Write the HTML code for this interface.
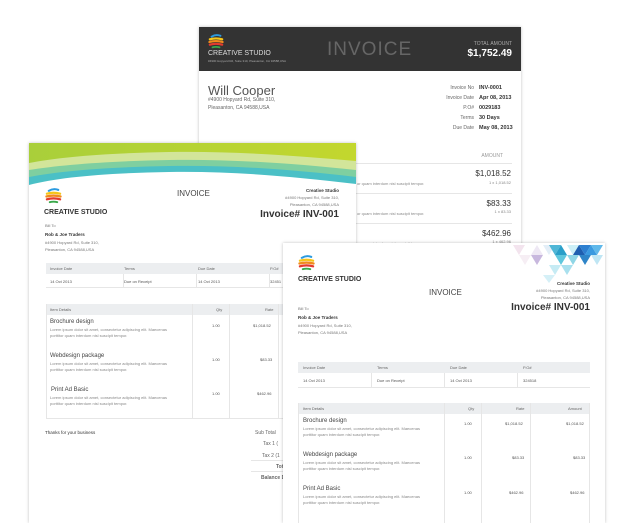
<!DOCTYPE html>
<html><head><meta charset="utf-8"><style>
*{margin:0;padding:0;box-sizing:border-box}
body{width:629px;height:510px;background:#fff;position:relative;overflow:hidden;font-family:"Liberation Sans",sans-serif;color:#444}
.card{position:absolute;background:#fff;box-shadow:0 0 3px rgba(0,0,0,.25);overflow:hidden}
.a{position:absolute;white-space:nowrap}
.t{font-size:5px;color:#666}
.s{font-size:4px;color:#888}
.g{position:absolute;background:#eceef0}
.l{position:absolute;background:#e6e6e6}
</style></head><body>
<svg width="0" height="0" style="position:absolute"><defs>
<g id="logo">
<path d="M4 3 Q9 0 14 2" stroke="#2b9be0" stroke-width="2.2" fill="none" stroke-linecap="round"/>
<path d="M2 6 Q9 4 16 6" stroke="#f5c518" stroke-width="2.4" fill="none" stroke-linecap="round"/>
<path d="M1.5 9 Q9 7 16.5 9" stroke="#f08a1c" stroke-width="2.4" fill="none" stroke-linecap="round"/>
<path d="M2 12 Q9 10 16 12" stroke="#e33b2e" stroke-width="2.4" fill="none" stroke-linecap="round"/>
<path d="M5 15 Q9 14 13 15" stroke="#3aa84a" stroke-width="2" fill="none" stroke-linecap="round"/>
</g></defs></svg>

<!-- back invoice -->
<div class="card" style="left:199px;top:27px;width:322px;height:300px">
  <div style="position:absolute;left:0;top:0;width:322px;height:44px;background:#333"></div>
  <svg class="a" style="left:9px;top:7px" width="16" height="16" viewBox="0 0 18 18"><use href="#logo"/></svg>
  <div class="a" style="left:9px;top:23px;font-size:7px;color:#ddd">CREATIVE STUDIO</div>
  <div class="a" style="left:9px;top:32px;font-size:3px;color:#aaa">#4900 Hopyard Rd, Suite 310, Pleasanton, CA 94588,USA</div>
  <div class="a" style="left:128px;top:12px;font-size:19px;color:#666;letter-spacing:1px">INVOICE</div>
  <div class="a" style="right:9px;top:14px;font-size:5px;color:#aaa">TOTAL AMOUNT</div>
  <div class="a" style="right:9px;top:21px;font-size:10px;color:#fff;font-weight:bold">$1,752.49</div>
  <div class="a" style="left:9px;top:56px;font-size:13px;color:#555">Will Cooper</div>
  <div class="a t" style="left:9px;top:70px">#4900 Hopyard Rd, Suite 310,</div>
  <div class="a t" style="left:9px;top:78px">Pleasanton, CA 94588,USA</div>
  <div class="a t" style="right:47px;top:56px;text-align:right;line-height:10px">Invoice No<br>Invoice Date<br>P.O#<br>Terms<br>Due Date</div>
  <div class="a" style="left:280px;top:56px;font-size:5.5px;color:#333;line-height:10px;font-weight:bold">INV-0001<br>Apr 08, 2013<br>0029183<br>30 Days<br>May 08, 2013</div>
  <div class="a t" style="right:18px;top:126px;color:#999">AMOUNT</div>
  <div class="l" style="left:150px;top:136px;width:163px;height:1px"></div>
  <div class="a" style="right:10px;top:142px;font-size:8px;color:#333">$1,018.52</div>
  <div class="a s" style="right:10px;top:153px">1 x 1,018.52</div>
  <div class="a s" style="left:158px;top:154px">or quam interdum nisl suscipit tempor.</div>
  <div class="l" style="left:150px;top:166px;width:163px;height:1px"></div>
  <div class="a" style="right:10px;top:172px;font-size:8px;color:#333">$83.33</div>
  <div class="a s" style="right:10px;top:182px">1 x 83.33</div>
  <div class="a s" style="left:158px;top:184px">or quam interdum nisl suscipit tempor.</div>
  <div class="l" style="left:150px;top:196px;width:163px;height:1px"></div>
  <div class="a" style="right:10px;top:202px;font-size:8px;color:#333">$462.96</div>
  <div class="a s" style="right:10px;top:212px">1 x 462.96</div>
  <div class="a s" style="left:158px;top:214px">or quam interdum nisl suscipit tempor.</div>
</div>

<!-- middle invoice -->
<div class="card" style="left:29px;top:143px;width:327px;height:380px">
  <svg class="a" style="left:0;top:0" width="327" height="46" viewBox="0 0 327 46">
    <defs><linearGradient id="lg" x1="0" x2="1"><stop offset="0" stop-color="#a9cf3a"/><stop offset="1" stop-color="#c3d72e"/></linearGradient></defs>
    <rect width="327" height="46" fill="#fff"/>
    <path d="M0 0H327V41C260 33 200 28 140 29 80 30 30 34 0 42Z" fill="#4bc0c6"/>
    <path d="M0 0H327V34C260 26 200 22 140 23 80 24 30 28 0 34Z" fill="#7fcfa0"/>
    <path d="M0 0H327V27C260 20 200 16 140 17 80 18 30 22 0 27Z" fill="#d2e59a"/>
    <path d="M0 0H327V18C260 12 200 8 140 9 80 10 30 14 0 20Z" fill="url(#lg)"/>
  </svg>
  <svg class="a" style="left:16px;top:45px" width="17" height="17" viewBox="0 0 18 18"><use href="#logo"/></svg>
  <div class="a" style="left:15px;top:66px;font-size:7px;color:#333;font-weight:bold">CREATIVE STUDIO</div>
  <div class="a" style="left:148px;top:46px;font-size:8px;color:#444">INVOICE</div>
  <div class="a" style="right:17px;top:45px;font-size:4.5px;color:#333;font-weight:bold">Creative Studio</div>
  <div class="a s" style="right:17px;top:51px;text-align:right;line-height:7px;color:#777">#4900 Hopyard Rd, Suite 310,<br>Pleasanton, CA 94588,USA</div>
  <div class="a" style="right:17px;top:66px;font-size:10px;color:#333;font-weight:bold">Invoice# INV-001</div>
  <div class="a s" style="left:16px;top:80px;color:#777">Bill To</div>
  <div class="a" style="left:16px;top:89px;font-size:4.5px;color:#333;font-weight:bold">Rob &amp; Joe Traders</div>
  <div class="a s" style="left:16px;top:96px;line-height:7px;color:#777">#4900 Hopyard Rd, Suite 310,<br>Pleasanton, CA 94588,USA</div>
  <div class="g" style="left:17px;top:120px;width:300px;height:11px"></div>
  <div class="l" style="left:17px;top:144px;width:300px;height:1px"></div>
  <div class="l" style="left:94px;top:131px;width:1px;height:13px"></div>
  <div class="l" style="left:167px;top:131px;width:1px;height:13px"></div>
  <div class="l" style="left:240px;top:131px;width:1px;height:13px"></div>
  <div class="a s" style="left:21px;top:123px;color:#666">Invoice Date</div>
  <div class="a s" style="left:95px;top:123px;color:#666">Terms</div>
  <div class="a s" style="left:169px;top:123px;color:#666">Due Date</div>
  <div class="a s" style="left:241px;top:123px;color:#666">P.O#</div>
  <div class="a s" style="left:21px;top:136px;color:#555">14 Oct 2013</div>
  <div class="a s" style="left:95px;top:136px;color:#555">Due on Receipt</div>
  <div class="a s" style="left:169px;top:136px;color:#555">14 Oct 2013</div>
  <div class="a s" style="left:241px;top:136px;color:#555">32451</div>
  <div class="g" style="left:17px;top:161px;width:300px;height:11px"></div>
  <div class="l" style="left:17px;top:275px;width:300px;height:1px"></div>
  <div class="l" style="left:17px;top:161px;width:1px;height:115px"></div>
  <div class="l" style="left:163px;top:161px;width:1px;height:115px"></div>
  <div class="l" style="left:200px;top:161px;width:1px;height:115px"></div>
  <div class="l" style="left:249px;top:161px;width:1px;height:115px"></div>
  <div class="a s" style="left:21px;top:164px;color:#666">Item Details</div>
  <div class="a s" style="left:187px;top:164px;color:#666">Qty</div>
  <div class="a s" style="left:236px;top:164px;color:#666">Rate</div>
  <div class="a" style="left:21px;top:176px;font-size:6px;color:#444">Brochure design</div>
  <div class="a s" style="left:21px;top:184px;line-height:6px">Lorem ipsum dolor sit amet, consectetur adipiscing elit. Maecenas<br>porttitor quam interdum nisl suscipit tempor.</div>
  <div class="a s" style="left:183px;top:180px;color:#555">1.00</div><div class="a s" style="left:224px;top:180px;color:#555">$1,018.52</div>
  <div class="a" style="left:21px;top:210px;font-size:6px;color:#444">Webdesign package</div>
  <div class="a s" style="left:21px;top:218px;line-height:6px">Lorem ipsum dolor sit amet, consectetur adipiscing elit. Maecenas<br>porttitor quam interdum nisl suscipit tempor.</div>
  <div class="a s" style="left:183px;top:214px;color:#555">1.00</div><div class="a s" style="left:231px;top:214px;color:#555">$83.33</div>
  <div class="a" style="left:22px;top:244px;font-size:6px;color:#444">Print Ad Basic</div>
  <div class="a s" style="left:21px;top:252px;line-height:6px">Lorem ipsum dolor sit amet, consectetur adipiscing elit. Maecenas<br>porttitor quam interdum nisl suscipit tempor.</div>
  <div class="a s" style="left:183px;top:248px;color:#555">1.00</div><div class="a s" style="left:228px;top:248px;color:#555">$462.96</div>
  <div class="a" style="left:16px;top:287px;font-size:4.5px;color:#333">Thanks for your business</div>
  <div class="a t" style="left:226px;top:287px">Sub Total</div>
  <div class="a t" style="left:234px;top:298px">Tax 1 (</div>
  <div class="a t" style="left:233px;top:310px">Tax 2 (1</div>
  <div class="l" style="left:222px;top:317px;width:100px;height:1px"></div>
  <div class="a t" style="left:247px;top:321px;font-weight:bold">Total</div>
  <div class="l" style="left:222px;top:328px;width:100px;height:1px"></div>
  <div class="a t" style="left:232px;top:332px;font-weight:bold">Balance Due</div>
</div>

<!-- front invoice -->
<div class="card" style="left:283px;top:243px;width:322px;height:280px">
  <svg class="a" style="left:226px;top:0" width="96" height="40" viewBox="0 0 96 40">
    <polygon points="4,2 16,2 10,12" fill="#f3e4ee"/>
    <polygon points="10,12 22,12 16,22" fill="#f6eef4"/>
    <polygon points="22,12 34,12 28,2" fill="#eee8f4"/>
    <polygon points="22,12 34,12 28,22" fill="#c8b8de"/>
    <polygon points="34,2 46,2 40,12" fill="#e3eef7"/>
    <polygon points="40,2 52,2 46,12" fill="#4fb6d6"/>
    <polygon points="46,12 58,12 52,2" fill="#2a9fc9"/>
    <polygon points="46,12 58,12 52,22" fill="#60c7dd"/>
    <polygon points="58,12 70,12 64,22" fill="#8fd6e6"/>
    <polygon points="52,22 64,22 58,32" fill="#a9e0ee"/>
    <polygon points="58,2 70,2 64,12" fill="#cceff7"/>
    <polygon points="64,12 76,12 70,2" fill="#1f5fb0"/>
    <polygon points="70,2 82,2 76,12" fill="#2d7fd0"/>
    <polygon points="70,12 82,12 76,22" fill="#2f85c8"/>
    <polygon points="76,12 88,12 82,2" fill="#3a9ae0"/>
    <polygon points="82,2 94,2 88,12" fill="#5fb8ea"/>
    <polygon points="82,12 94,12 88,22" fill="#bfe6f4"/>
    <polygon points="40,22 52,22 46,32" fill="#c6ebf4"/>
    <polygon points="34,32 46,32 40,40" fill="#d5f0f7"/>
  </svg>
  <svg class="a" style="left:15px;top:12px" width="17" height="17" viewBox="0 0 18 18"><use href="#logo"/></svg>
  <div class="a" style="left:15px;top:33px;font-size:7px;color:#333;font-weight:bold">CREATIVE STUDIO</div>
  <div class="a" style="left:146px;top:45px;font-size:8px;color:#444">INVOICE</div>
  <div class="a" style="right:15px;top:38px;font-size:4.5px;color:#333;font-weight:bold">Creative Studio</div>
  <div class="a s" style="right:15px;top:44px;text-align:right;line-height:7px;color:#777">#4900 Hopyard Rd, Suite 310,<br>Pleasanton, CA 94588,USA</div>
  <div class="a" style="right:15px;top:59px;font-size:10px;color:#333;font-weight:bold">Invoice# INV-001</div>
  <div class="a s" style="left:15px;top:63px;color:#777">Bill To</div>
  <div class="a" style="left:15px;top:72px;font-size:4.5px;color:#333;font-weight:bold">Rob &amp; Joe Traders</div>
  <div class="a s" style="left:15px;top:79px;line-height:7px;color:#777">#4900 Hopyard Rd, Suite 310,<br>Pleasanton, CA 94588,USA</div>
  <div class="g" style="left:15px;top:119px;width:292px;height:11px"></div>
  <div class="l" style="left:15px;top:144px;width:292px;height:1px"></div>
  <div class="l" style="left:88px;top:130px;width:1px;height:14px"></div>
  <div class="l" style="left:161px;top:130px;width:1px;height:14px"></div>
  <div class="l" style="left:234px;top:130px;width:1px;height:14px"></div>
  <div class="a s" style="left:20px;top:122px;color:#666">Invoice Date</div>
  <div class="a s" style="left:94px;top:122px;color:#666">Terms</div>
  <div class="a s" style="left:167px;top:122px;color:#666">Due Date</div>
  <div class="a s" style="left:240px;top:122px;color:#666">P.O#</div>
  <div class="a s" style="left:20px;top:135px;color:#555">14 Oct 2013</div>
  <div class="a s" style="left:94px;top:135px;color:#555">Due on Receipt</div>
  <div class="a s" style="left:167px;top:135px;color:#555">14 Oct 2013</div>
  <div class="a s" style="left:240px;top:135px;color:#555">324518</div>
  <div class="g" style="left:15px;top:160px;width:292px;height:11px"></div>
  <div class="l" style="left:15px;top:160px;width:1px;height:120px"></div>
  <div class="l" style="left:306px;top:160px;width:1px;height:120px"></div>
  <div class="l" style="left:161px;top:160px;width:1px;height:120px"></div>
  <div class="l" style="left:198px;top:160px;width:1px;height:120px"></div>
  <div class="l" style="left:247px;top:160px;width:1px;height:120px"></div>
  <div class="a s" style="left:20px;top:163px;color:#666">Item Details</div>
  <div class="a s" style="left:185px;top:163px;color:#666">Qty</div>
  <div class="a s" style="left:233px;top:163px;color:#666">Rate</div>
  <div class="a s" style="left:285px;top:163px;color:#666">Amount</div>
  <div class="a" style="left:20px;top:175px;font-size:6px;color:#444">Brochure design</div>
  <div class="a s" style="left:20px;top:183px;line-height:6px">Lorem ipsum dolor sit amet, consectetur adipiscing elit. Maecenas<br>porttitor quam interdum nisl suscipit tempor.</div>
  <div class="a s" style="left:181px;top:178px;color:#555">1.00</div><div class="a s" style="left:222px;top:178px;color:#555">$1,018.52</div><div class="a s" style="left:283px;top:178px;color:#555">$1,018.52</div>
  <div class="a" style="left:20px;top:209px;font-size:6px;color:#444">Webdesign package</div>
  <div class="a s" style="left:20px;top:217px;line-height:6px">Lorem ipsum dolor sit amet, consectetur adipiscing elit. Maecenas<br>porttitor quam interdum nisl suscipit tempor.</div>
  <div class="a s" style="left:181px;top:212px;color:#555">1.00</div><div class="a s" style="left:229px;top:212px;color:#555">$83.33</div><div class="a s" style="left:290px;top:212px;color:#555">$83.33</div>
  <div class="a" style="left:20px;top:243px;font-size:6px;color:#444">Print Ad Basic</div>
  <div class="a s" style="left:20px;top:251px;line-height:6px">Lorem ipsum dolor sit amet, consectetur adipiscing elit. Maecenas<br>porttitor quam interdum nisl suscipit tempor.</div>
  <div class="a s" style="left:181px;top:247px;color:#555">1.00</div><div class="a s" style="left:226px;top:247px;color:#555">$462.96</div><div class="a s" style="left:287px;top:247px;color:#555">$462.96</div>
</div>
</body></html>
